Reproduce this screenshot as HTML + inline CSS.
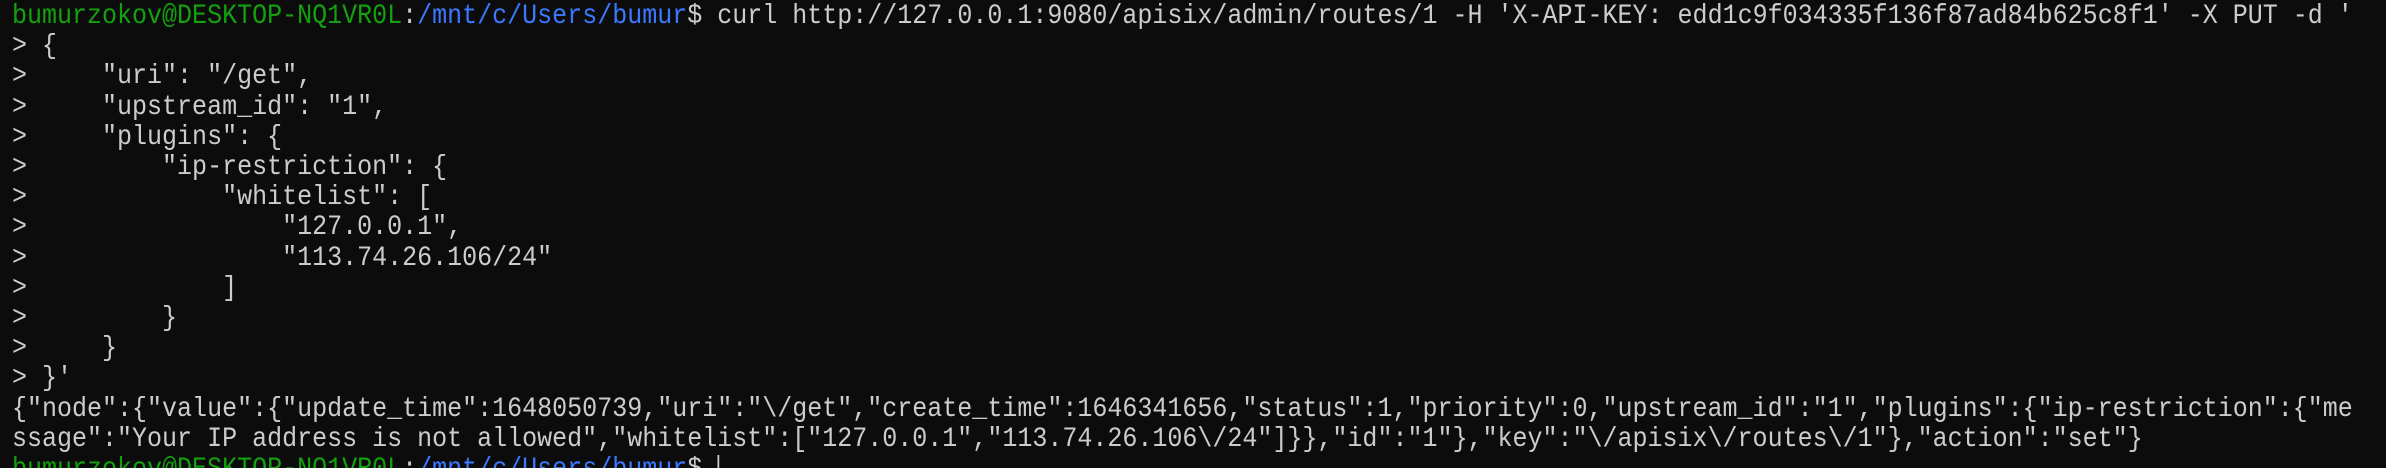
<!DOCTYPE html>
<html><head><style>
html,body{margin:0;padding:0;background:#0c0c0c;width:2386px;height:468px;overflow:hidden}
#w{position:relative;width:2386px;height:468px;overflow:hidden;background:#0c0c0c}
pre{margin:0;padding:0;position:absolute;left:12px;top:2px;font-family:"Liberation Mono","DejaVu Sans Mono",monospace;font-size:28px;line-height:30.2px;color:#cccccc;white-space:pre;transform:scaleX(0.893);transform-origin:0 0}
.g{color:#13a10e}
.b{color:#3b78ff}
.c{display:inline-block;width:2px;height:26px;background:#ccc;vertical-align:-5px}
</style></head><body><div id="w"><pre><span class="g">bumurzokov@DESKTOP-NQ1VR0L</span>:<span class="b">/mnt/c/Users/bumur</span>$ curl http://127.0.0.1:9080/apisix/admin/routes/1 -H 'X-API-KEY: edd1c9f034335f136f87ad84b625c8f1' -X PUT -d '
&gt; {
&gt;     "uri": "/get",
&gt;     "upstream_id": "1",
&gt;     "plugins": {
&gt;         "ip-restriction": {
&gt;             "whitelist": [
&gt;                 "127.0.0.1",
&gt;                 "113.74.26.106/24"
&gt;             ]
&gt;         }
&gt;     }
&gt; }'
{"node":{"value":{"update_time":1648050739,"uri":"\/get","create_time":1646341656,"status":1,"priority":0,"upstream_id":"1","plugins":{"ip-restriction":{"me
ssage":"Your IP address is not allowed","whitelist":["127.0.0.1","113.74.26.106\/24"]}},"id":"1"},"key":"\/apisix\/routes\/1"},"action":"set"}
<span class="g">bumurzokov@DESKTOP-NQ1VR0L</span>:<span class="b">/mnt/c/Users/bumur</span>$ <span class="c"></span></pre></div></body></html>
